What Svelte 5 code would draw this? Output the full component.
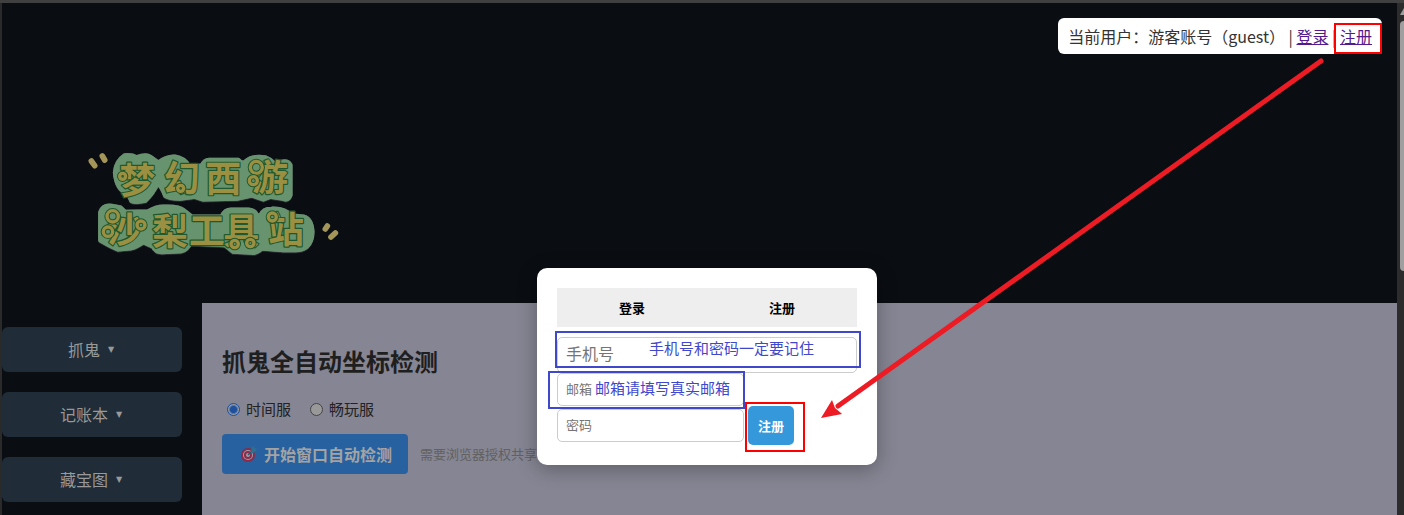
<script>
  let server = $state('time');
  let phone = $state('');
  let email = $state('');
  let password = $state('');

  const menus = ['抓鬼', '记账本', '藏宝图'];

  // logo 笔画上的小圆圈 [x, y, r]
  const rings = [
    [158, 124, 9],
    [332, 160, 9],
    [559, 97, 18],
    [550, 137, 12],
    [128, 244, 17],
    [114, 290, 14],
    [213, 270, 12],
    [494, 327, 11],
    [541, 324, 11],
    [607, 246, 12],
  ];
</script>

<div class="window">
  <div class="page">
    <header class="banner">
      <svg class="logo" viewBox="0 0 870 405" role="img" aria-label="梦幻西游 沙梨工具站">
        <g class="plate">
          <path d="M136 112Q138 80 165 62Q185 60 200 68Q228 58 240 66L265 84Q290 64 315 66Q342 70 355 92L395 94Q405 74 420 76H505Q515 88 525 82Q545 62 585 68Q602 74 615 88Q650 72 660 90V180Q655 196 640 190L600 184L580 192L545 180L500 190L400 192L375 184L330 190Q300 190 287 182Q275 150 262 144Q248 175 225 196Q200 202 185 197Q180 180 165 170Q140 158 136 112Z" />
          <path d="M92 232Q100 210 125 214L150 218L165 232L235 230Q260 214 285 216Q325 214 340 226L365 246H455Q465 224 485 225H535Q555 226 560 242L572 242Q580 222 605 222Q645 220 662 242L700 246Q724 252 726 290Q726 318 710 334Q695 346 670 344L640 344L575 339Q560 354 545 352L490 349L465 329L360 324Q350 344 335 347L275 350Q258 350 250 334L220 320Q200 334 185 338L145 342Q132 338 92 315Z" />
        </g>
        <g class="sparks">
          <path d="M64 78L74 92M97 63L104 75M772 273L766 282M796 294L783 306" />
        </g>
        <g class="letters">
          <text x="148 281 406 546" y="178 170 172 168">梦幻西游</text>
          <text x="111 246 357 460 594" y="324 330 327 328 323">沙梨工具站</text>
        </g>
        {#each rings as [cx, cy, r]}
          <circle class="ring-edge" {cx} {cy} {r} />
          <circle class="ring" {cx} {cy} {r} />
        {/each}
      </svg>
      <div class="user-bar">
        当前用户：游客账号（guest） | <a href="#login">登录</a> | <a href="#register" class="marked">注册<span class="mark mark-link"></span></a>
      </div>
    </header>

    <div class="body">
      <nav class="sidebar">
        {#each menus as menu}
          <button class="menu-btn">{menu}<span class="caret">▼</span></button>
        {/each}
      </nav>

      <main class="content">
        <h2>抓鬼全自动坐标检测</h2>
        <div class="servers">
          <label><input type="radio" value="time" bind:group={server} />时间服</label>
          <label><input type="radio" value="free" bind:group={server} />畅玩服</label>
        </div>
        <div class="actions">
          <button class="start-btn">
            <svg width="18" height="18" viewBox="0 0 18 18" aria-hidden="true">
              <circle cx="8" cy="10" r="7" fill="#8c2a48" />
              <circle cx="8" cy="10" r="5" fill="#a09ba8" />
              <circle cx="8" cy="10" r="4" fill="#8c2a48" />
              <circle cx="8" cy="10" r="2" fill="#a09ba8" />
              <path d="M8 10l5-5" stroke="#275a70" stroke-width="1.5" />
              <path d="M11 6l1-4 2-1v2l3 1-2 3-3 1z" fill="#2d7191" />
            </svg>
            开始窗口自动检测
          </button>
          <span class="hint">需要浏览器授权共享</span>
        </div>
      </main>
    </div>

    <div class="overlay">
      <div class="modal">
        <div class="tabs">
          <button>登录</button>
          <button>注册</button>
        </div>
        <form onsubmit={(e) => e.preventDefault()}>
          <div class="row">
            <input class="phone" type="text" placeholder="手机号" aria-label="手机号" bind:value={phone} />
            <div class="mark mark-phone">手机号和密码一定要记住</div>
          </div>
          <div class="row">
            <input type="email" placeholder="邮箱" aria-label="邮箱" bind:value={email} />
            <div class="mark mark-email">邮箱请填写真实邮箱</div>
          </div>
          <div class="row">
            <input type="password" placeholder="密码" aria-label="密码" bind:value={password} />
            <button class="submit">注册<span class="mark mark-submit"></span></button>
          </div>
        </form>
      </div>
    </div>

    <svg class="arrow" width="510" height="370" viewBox="0 0 510 370" aria-hidden="true">
      <path d="M503 10L20 355" stroke="#ed1c24" stroke-width="5" stroke-linecap="round" />
      <path d="M3 367L14 349L17 357L23 362L24 363Z" fill="#ed1c24" />
    </svg>
  </div>

  <div class="scrollbar">
    <svg width="7" height="12" viewBox="0 0 7 12" aria-hidden="true">
      <path d="M3 12L7 5V12Z" fill="#9f9f9f" />
    </svg>
    <div class="thumb"></div>
  </div>
</div>

<style>
  :global(body) {
    background: #0a0d12;
  }

  .window {
    box-sizing: border-box;
    display: flex;
    min-height: 100vh;
    border-top: 3px solid #404040;
    font-family: 'Noto Sans CJK SC', sans-serif;
    font-size: 16px;
    color: #333;
  }

  button,
  input {
    font-family: inherit;
    box-sizing: border-box;
    margin: 0;
  }

  button {
    border: none;
    cursor: pointer;
  }

  .page {
    position: relative;
    flex: 1;
    display: flex;
    flex-direction: column;
    border-left: 2px solid #2a2a2b;
    background: #0a0d12;
  }

  .banner {
    display: flex;
    justify-content: space-between;
    align-items: flex-start;
    height: 300px;
  }

  .logo {
    width: 290px;
    height: 135px;
    margin: 132px 0 0 68px;
    font-size: 108px;
    font-weight: 700;
    stroke-linejoin: round;
    stroke-linecap: round;
  }

  .plate {
    fill: #67946f;
    stroke: #67946f;
    stroke-width: 15px;
    filter: drop-shadow(0 1px 1px #77777d);
  }

  .letters {
    fill: #9b8f42;
    stroke: #20592d;
    stroke-width: 7px;
    paint-order: stroke;
  }

  .ring-edge {
    fill: #67946f;
    stroke: #20592d;
    stroke-width: 16px;
  }

  .ring {
    fill: none;
    stroke: #9b8f42;
    stroke-width: 10px;
  }

  .sparks {
    fill: none;
    stroke: #a49558;
    stroke-width: 17px;
  }

  .user-bar {
    margin: 15px 15px 0 0;
    padding: 6px 10px;
    border-radius: 6px;
    background: #fff;
    line-height: 24px;
    white-space: nowrap;
  }

  .user-bar a {
    color: #551a8b;
  }

  .marked {
    position: relative;
  }

  .body {
    flex: 1;
    display: flex;
  }

  .sidebar {
    display: flex;
    flex-direction: column;
    gap: 20px;
    flex: 0 0 180px;
    padding: 24px 20px 0 0;
  }

  .menu-btn {
    display: flex;
    align-items: center;
    justify-content: center;
    gap: 8px;
    height: 45px;
    padding: 0 8px 2px 6px;
    border-radius: 6px;
    background: #202c37;
    color: #999;
    font-size: 16px;
  }

  .caret {
    padding-top: 2px;
    font-family: 'DejaVu Sans', sans-serif;
    font-size: 8px;
  }

  .content {
    flex: 1;
    padding: 40px 20px 20px;
    background: #858593;
  }

  h2 {
    margin: 0;
    font-size: 24px;
    line-height: 36px;
    color: #1f1f1f;
  }

  .servers {
    display: flex;
    gap: 19px;
    margin-top: 19px;
    padding-left: 5px;
    font-size: 15px;
    line-height: 22px;
    color: #222;
  }

  .servers label {
    display: flex;
    align-items: center;
    gap: 6px;
  }

  .servers input {
    appearance: none;
    width: 13px;
    height: 13px;
    border: 1px solid #444;
    border-radius: 50%;
    background: #999;
  }

  .servers input:checked {
    border-color: #1c4f9e;
    background: radial-gradient(circle, #1c4f9e 3px, #999 5px);
  }

  .actions {
    display: flex;
    align-items: center;
    gap: 12px;
    margin-top: 14px;
  }

  .start-btn {
    display: flex;
    align-items: center;
    gap: 6px;
    height: 40px;
    padding: 0 16px 0 18px;
    border-radius: 4px;
    background: #28619f;
    color: #a3a3a3;
    font-size: 16px;
    font-weight: 700;
  }

  .hint {
    padding-bottom: 2px;
    font-size: 13px;
    color: #616161;
  }

  .overlay {
    position: absolute;
    inset: 0;
    display: flex;
    justify-content: center;
    align-items: flex-start;
    padding: 265px 0 0 15px;
  }

  .modal {
    box-sizing: border-box;
    width: 340px;
    padding: 20px;
    border-radius: 10px;
    background: #fff;
    box-shadow: 0 4px 20px rgba(0, 0, 0, 0.3);
  }

  .tabs {
    display: flex;
    margin-bottom: 10px;
  }

  .tabs button {
    flex: 1;
    height: 39px;
    padding: 0;
    background: #eee;
    color: #000;
    font-size: 13px;
    font-weight: 700;
  }

  .row {
    position: relative;
    display: flex;
    align-items: center;
    gap: 4px;
  }

  .row input {
    width: 187px;
    height: 33px;
    padding: 0 8px 2px;
    border: 1px solid #ccc;
    border-radius: 5px;
    background: #fff;
    font-size: 13px;
  }

  .row .phone {
    width: 100%;
    height: 36px;
    padding-bottom: 4px;
    font-size: 16px;
  }

  .row input::placeholder {
    color: #757575;
  }

  .submit {
    position: relative;
    height: 39px;
    padding: 0 10px;
    border-radius: 5px;
    background: #3498db;
    color: #fff;
    font-size: 13px;
    font-weight: 700;
  }

  /* 标注框 */
  .mark {
    position: absolute;
    box-sizing: border-box;
    border: 2px solid #3f48cc;
    color: #3f48cc;
    font-size: 15px;
    line-height: 30px;
    white-space: nowrap;
    pointer-events: none;
  }

  .mark-phone {
    top: -6px;
    left: -2px;
    right: -4px;
    height: 37px;
    padding-left: 92px;
  }

  .mark-email {
    top: -2px;
    left: -9px;
    width: 197px;
    height: 38px;
    padding-left: 45px;
  }

  .mark-submit {
    top: -4px;
    left: -3px;
    width: 60px;
    height: 50px;
    border-color: #f00;
  }

  .mark-link {
    top: -1px;
    left: -6px;
    width: 48px;
    height: 31px;
    border-color: #f00;
  }

  .arrow {
    position: absolute;
    top: 48px;
    right: 69px;
    fill: none;
    pointer-events: none;
  }

  .scrollbar {
    display: flex;
    flex-direction: column;
    gap: 6px;
    flex: 0 0 7px;
    background: #2c2c2c;
  }

  .thumb {
    height: 250px;
    margin-left: 3px;
    border-radius: 4px 0 0 4px;
    background: #9f9f9f;
  }
</style>
